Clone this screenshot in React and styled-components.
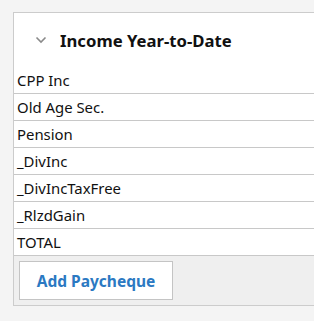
import React from "react";
import styled, { createGlobalStyle } from "styled-components";

const Global = createGlobalStyle`
  html, body { margin: 0; padding: 0; background: #f4f4f4; }
  body { font-family: "Noto Sans", "Open Sans", sans-serif; }
`;

const Page = styled.div`
  padding: 12px 0 0 13px;
  height: 321px;
  box-sizing: border-box;
  overflow: hidden;
`;

const Card = styled.div`
  width: 320px;
  border: 1px solid #cccccc;
  border-right: none;
  background: #ffffff;
`;

const Header = styled.div`
  height: 54px;
  display: flex;
  align-items: center;
  padding-left: 21px;
  gap: 13px;
`;

const Title = styled.h2`
  margin: 0;
  font-size: 16.7px;
  font-weight: 700;
  color: #111;
`;

const Row = styled.div`
  height: 26px;
  border-top: 1px solid #c8c8c8;
  display: flex;
  align-items: center;
  padding-left: 3px;
  font-size: 14.9px;
  color: #111;
  &:first-of-type { border-top: none; }
`;

const Rows = styled.div`
  border-bottom: 1px solid #c8c8c8;
`;

const Footer = styled.div`
  background: #efefef;
  padding: 5px 0 5px 5px;
`;

const Button = styled.button`
  display: block;
  width: 154px;
  height: 39px;
  background: #fff;
  border: 1px solid #c4c4c4;
  font-family: inherit;
  font-size: 15.5px;
  font-weight: 700;
  color: #2b79c2;
  padding: 0;
`;

const Chevron = () => (
  <svg width="12" height="8" viewBox="0 0 12 8">
    <path d="M1.5 1.5 L6 6 L10.5 1.5" fill="none" stroke="#8a8a8a" strokeWidth="1.6" />
  </svg>
);

const rows = ["CPP Inc", "Old Age Sec.", "Pension", "_DivInc", "_DivIncTaxFree", "_RlzdGain", "TOTAL"];

export default function App() {
  return (
    <Page>
      <Global />
      <Card>
        <Header>
          <Chevron />
          <Title>Income Year-to-Date</Title>
        </Header>
        <Rows>
          {rows.map((r) => (
            <Row key={r}>{r}</Row>
          ))}
        </Rows>
        <Footer>
          <Button>Add Paycheque</Button>
        </Footer>
      </Card>
    </Page>
  );
}
